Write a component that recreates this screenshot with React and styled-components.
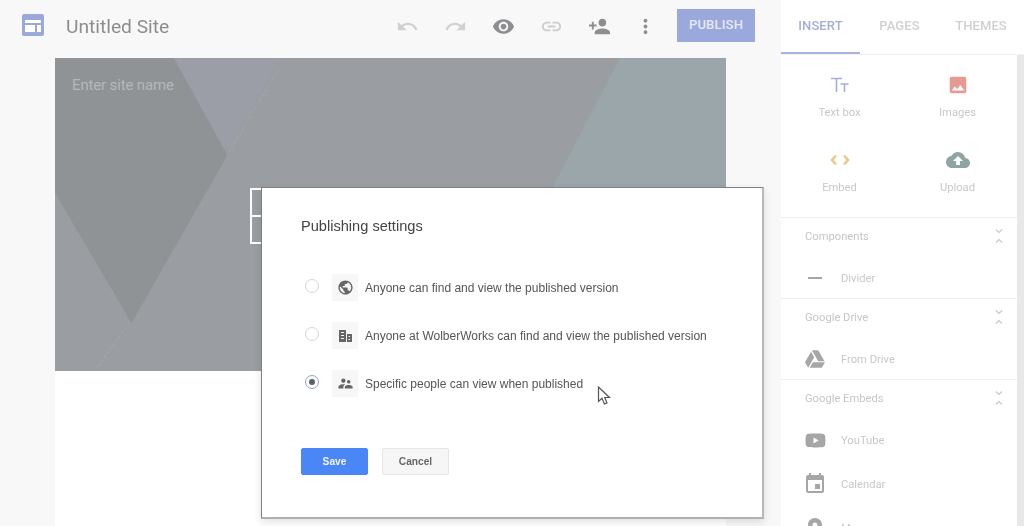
import React from "react";
import styled, { createGlobalStyle } from "styled-components";
import {
  MdUndo, MdRedo, MdVisibility, MdLink, MdPersonAdd, MdMoreVert, MdPublic, MdSupervisorAccount,
  MdImage, MdCloudUpload, MdRemove, MdEvent, MdPlace,
} from "react-icons/md";
import { FaGoogleDrive, FaYoutube } from "react-icons/fa";

const GlobalStyle = createGlobalStyle`
  html, body { margin: 0; padding: 0; height: 100%; overflow: hidden; background: #f8f8f9; }
  body { font-family: Roboto, "Liberation Sans", sans-serif; }
`;

const Page = styled.div`
  position: relative;
  display: grid;
  grid-template-columns: 781px 243px;
  width: 1024px;
  height: 526px;
  overflow: hidden;
  filter: blur(0.4px);
`;

// Left side: toolbar and site canvas
const Main = styled.div`
  display: flex;
  flex-direction: column;
  min-width: 0;
`;
const TopBar = styled.header`
  display: flex;
  align-items: center;
  height: 58px;
  padding: 0 26px 0 22px;
  box-sizing: border-box;
`;
const Logo = styled.svg`
  width: 22px;
  height: 22px;
  margin-top: -8px;
`;
const SiteTitle = styled.div`
  margin: -6px 0 0 22px;
  font-size: 19.2px;
  color: #8d8d8f;
`;
const Tools = styled.div`
  display: flex;
  margin: -6px 10px 0 auto;
`;
const ToolButton = styled.div`
  display: flex;
  align-items: center;
  justify-content: center;
  width: ${(p) => (p.$narrow ? "44px" : "48px")};
  font-size: 23px;
  color: ${(p) => p.$color || "#d0d0d2"};
`;
const PublishButton = styled.div`
  display: flex;
  align-items: center;
  justify-content: center;
  width: 78px;
  height: 33px;
  margin-top: -8px;
  padding-bottom: 2px;
  box-sizing: border-box;
  background: #9aa8dc;
  color: #e6e9f6;
  font-size: 13px;
  font-weight: 500;
  letter-spacing: 0.2px;
`;
const Canvas = styled.div`
  flex: 1;
  width: 671px;
  margin-left: 55px;
  background: #fff;
`;
const Hero = styled.div`
  position: relative;
  height: 313px;
  background: #9a9ea3;
`;
const HeroArt = styled.svg`
  display: block;
  width: 671px;
  height: 313px;
`;
const SiteName = styled.div`
  position: absolute;
  left: 17px;
  top: 18px;
  font-size: 15px;
  letter-spacing: -0.15px;
  color: #b5b7ba;
`;
const TitleStub = styled.div`
  position: absolute;
  left: 195px;
  top: 130px;
  width: 30px;
  height: 56px;
  box-sizing: border-box;
  border: 2px solid #fff;
  &::after {
    content: "";
    display: block;
    height: 2px;
    margin-top: 25px;
    background: #fff;
  }
`;

// Right side: insert panel
const Side = styled.aside`
  display: flex;
  flex-direction: column;
  background: #fff;
  overflow: hidden;
`;
const Tabs = styled.nav`
  display: grid;
  grid-template-columns: 79px 79px 84px;
  height: 55px;
  box-sizing: border-box;
  border-bottom: 1px solid #f2f2f2;
`;
const Tab = styled.div`
  display: flex;
  align-items: center;
  justify-content: center;
  height: 54px;
  box-sizing: border-box;
  padding-bottom: 2px;
  font-size: 13px;
  font-weight: 500;
  letter-spacing: 0.1px;
  color: ${(p) => (p.$active ? "#a3aed9" : "#cfd0d2")};
  border-bottom: 2px solid ${(p) => (p.$active ? "#a9b4de" : "transparent")};
`;
const SideBody = styled.div`
  display: flex;
  flex-direction: column;
  width: 236px;
  border-right: 7px solid #e8e8e8;
`;
const ToolGrid = styled.div`
  display: grid;
  grid-template-columns: 117px 119px;
  padding-bottom: 12px;
  border-bottom: 1px solid #efefef;
`;
const ToolCell = styled.div`
  display: flex;
  flex-direction: column;
  align-items: center;
  height: 75px;
  padding-top: 19px;
  box-sizing: border-box;
`;
const ToolIcon = styled.div`
  display: flex;
  align-items: center;
  justify-content: center;
  height: 22px;
  font-size: ${(p) => p.$size || 24}px;
  color: ${(p) => p.$color};
`;
const ToolLabel = styled.div`
  margin-top: 10px;
  font-size: 11.2px;
  line-height: 14px;
  color: #c8c8c8;
`;
const Section = styled.section`
  border-bottom: ${(p) => (p.$last ? "none" : "1px solid #efefef")};
`;
const SectionHeader = styled.div`
  display: flex;
  align-items: center;
  justify-content: space-between;
  height: 36px;
  padding: 0 13px 0 24px;
  font-size: 11.2px;
  color: #c6c6c6;
`;
const Chevrons = styled.svg`
  width: 10px;
  height: 18px;
`;
const ItemList = styled.div`
  display: flex;
  flex-direction: column;
  gap: 4px;
  padding-top: 4px;
`;
const Item = styled.div`
  display: flex;
  align-items: center;
  height: 40px;
  padding-left: 22px;
  font-size: 11.2px;
  color: #c8c8c8;
`;
const ItemIcon = styled.div`
  display: flex;
  align-items: center;
  justify-content: center;
  width: 24px;
  margin-right: 14px;
  font-size: ${(p) => p.$size || 24}px;
  color: #a6a6a6;
`;

// Publishing dialog
const Dialog = styled.div`
  position: absolute;
  left: 261px;
  top: 187px;
  width: 503px;
  height: 332px;
  box-sizing: border-box;
  padding: 29px 39px 0;
  background: #fff;
  border: 1px solid #7f8084;
  border-right: 2px solid #b8b8b8;
  border-bottom: 2px solid #b0b0b0;
  box-shadow: 0 3px 8px rgba(0, 0, 0, 0.12);
`;
const DialogTitle = styled.h2`
  margin: 0 0 39px;
  font: 400 14.6px/18px "Liberation Sans", Arial, sans-serif;
  color: #444;
`;
const Options = styled.div`
  display: flex;
  flex-direction: column;
  gap: 21px;
`;
const Option = styled.div`
  display: flex;
  align-items: center;
  height: 27px;
`;
const Radio = styled.span`
  display: flex;
  align-items: center;
  justify-content: center;
  width: 14px;
  height: 14px;
  margin: -3px 13px 0 4px;
  box-sizing: border-box;
  border-radius: 50%;
  border: 1px solid ${(p) => (p.$checked ? "#8e9fd4" : "#d6d6d6")};
  &::after {
    content: "";
    display: ${(p) => (p.$checked ? "block" : "none")};
    width: 6px;
    height: 6px;
    border-radius: 50%;
    background: #5a5f68;
  }
`;
const OptionIcon = styled.span`
  display: flex;
  align-items: center;
  justify-content: center;
  width: 26px;
  height: 27px;
  margin-right: 7px;
  background: #f7f7f7;
  font-size: 17px;
  color: #666;
`;
const OptionText = styled.span`
  font: 400 12px/16px "Liberation Sans", Arial, sans-serif;
  color: #555;
`;
const Actions = styled.div`
  display: flex;
  gap: 14px;
  margin-top: 51px;
`;
const Button = styled.div`
  display: flex;
  align-items: center;
  justify-content: center;
  width: 67px;
  height: 27px;
  box-sizing: border-box;
  border-radius: 2px;
  font: 700 10.2px "Liberation Sans", Arial, sans-serif;
  color: ${(p) => (p.$primary ? "#f2f6ff" : "#666")};
  background: ${(p) => (p.$primary ? "#4a86f5" : "#f6f6f6")};
  border: 1px solid ${(p) => (p.$primary ? "#4a86f5" : "#e6e6e6")};
`;
const Pointer = styled.svg`
  position: absolute;
  left: 597px;
  top: 386px;
  width: 15px;
  height: 20px;
`;

function Chevs() {
  return (
    <Chevrons viewBox="0 0 10 18" fill="none" stroke="#c9c9c9" strokeWidth="1.2">
      <path d="M2 2.500l3 3 3-3" />
      <path d="M2 15.500l3-3 3 3" />
    </Chevrons>
  );
}

function OfficeIcon() {
  return (
    <svg width="13" height="13" viewBox="0 0 13 13" fill="#666">
      <path d="M0 1h7v12H0z" />
      <path d="M8 5h5v8H8z" />
      <path fill="#f7f7f7" d="M2 3h3v1H2zM2 6h3v1H2zM2 9h3v1H2zM9.500 7H11v1H9.500zM9.500 10H11v1H9.500z" />
    </svg>
  );
}

function TextBoxIcon() {
  return (
    <svg width="18" height="16" viewBox="0 0 18 16" fill="none" stroke="#a3aedf" strokeWidth="1.6">
      <path d="M0 1.500h11M5.500 1.500V15M9.500 7h8M13.500 7v8" />
    </svg>
  );
}

function EmbedIcon() {
  return (
    <svg width="20" height="12" viewBox="0 0 20 12" fill="none" stroke="#ecc98a" strokeWidth="2.6">
      <path d="M6 1.500L2 6l4 4.500M14 1.500L18 6l-4 4.500" />
    </svg>
  );
}

export default function App() {
  return (
    <Page>
      <GlobalStyle />
      <Main>
        <TopBar>
          <Logo viewBox="0 0 22 22">
            <rect width="22" height="22" rx="2" fill="#9aa8dc" />
            <path fill="#fff" d="M3 6h16v3H3zM3 11h10v7H3zM15 11h4v7h-4z" />
          </Logo>
          <SiteTitle>Untitled Site</SiteTitle>
          <Tools>
            <ToolButton><MdUndo /></ToolButton>
            <ToolButton><MdRedo /></ToolButton>
            <ToolButton $color="#8e8e90"><MdVisibility /></ToolButton>
            <ToolButton $color="#cdcdcf"><MdLink /></ToolButton>
            <ToolButton $color="#8e8e90"><MdPersonAdd /></ToolButton>
            <ToolButton $narrow $color="#8e8e90"><MdMoreVert /></ToolButton>
          </Tools>
          <PublishButton>PUBLISH</PublishButton>
        </TopBar>
        <Canvas>
          <Hero>
            <HeroArt viewBox="0 0 671 313">
              <path fill="#909395" d="M0 0H119L172.500 97L76.500 265L0 135Z" />
              <path fill="#9b9ea6" d="M119 0H224L172.500 97Z" />
              <path fill="#9aa6aa" d="M565 0H671V313H402Z" />
              <path stroke="#a4a69e" strokeWidth="2" strokeDasharray="3 2" opacity="0.7" d="M224 10L172.500 97M74 265L43 309" />
            </HeroArt>
            <SiteName>Enter site name</SiteName>
            <TitleStub />
          </Hero>
        </Canvas>
      </Main>
      <Side>
        <Tabs>
          <Tab $active>INSERT</Tab>
          <Tab>PAGES</Tab>
          <Tab>THEMES</Tab>
        </Tabs>
        <SideBody>
          <ToolGrid>
            <ToolCell>
              <ToolIcon><TextBoxIcon /></ToolIcon>
              <ToolLabel>Text box</ToolLabel>
            </ToolCell>
            <ToolCell>
              <ToolIcon $color="#e69a92" $size={22}><MdImage /></ToolIcon>
              <ToolLabel>Images</ToolLabel>
            </ToolCell>
            <ToolCell>
              <ToolIcon><EmbedIcon /></ToolIcon>
              <ToolLabel>Embed</ToolLabel>
            </ToolCell>
            <ToolCell>
              <ToolIcon $color="#8fa5a3" $size={24}><MdCloudUpload /></ToolIcon>
              <ToolLabel>Upload</ToolLabel>
            </ToolCell>
          </ToolGrid>
          <Section>
            <SectionHeader>Components<Chevs /></SectionHeader>
            <ItemList>
              <Item><ItemIcon><MdRemove /></ItemIcon>Divider</Item>
            </ItemList>
          </Section>
          <Section>
            <SectionHeader>Google Drive<Chevs /></SectionHeader>
            <ItemList>
              <Item><ItemIcon $size={20}><FaGoogleDrive /></ItemIcon>From Drive</Item>
            </ItemList>
          </Section>
          <Section $last>
            <SectionHeader>Google Embeds<Chevs /></SectionHeader>
            <ItemList>
              <Item><ItemIcon $size={21}><FaYoutube /></ItemIcon>YouTube</Item>
              <Item><ItemIcon><MdEvent /></ItemIcon>Calendar</Item>
              <Item><ItemIcon><MdPlace /></ItemIcon>Map</Item>
            </ItemList>
          </Section>
        </SideBody>
      </Side>
      <Dialog>
        <DialogTitle>Publishing settings</DialogTitle>
        <Options>
          <Option>
            <Radio />
            <OptionIcon><MdPublic /></OptionIcon>
            <OptionText>Anyone can find and view the published version</OptionText>
          </Option>
          <Option>
            <Radio />
            <OptionIcon><OfficeIcon /></OptionIcon>
            <OptionText>Anyone at WolberWorks can find and view the published version</OptionText>
          </Option>
          <Option>
            <Radio $checked />
            <OptionIcon><MdSupervisorAccount /></OptionIcon>
            <OptionText>Specific people can view when published</OptionText>
          </Option>
        </Options>
        <Actions>
          <Button $primary>Save</Button>
          <Button>Cancel</Button>
        </Actions>
      </Dialog>
      <Pointer viewBox="0 0 15 20" fill="#fff" stroke="#555" strokeWidth="1.2">
        <path d="M1.500 1V15.500L5 12.300L7.400 18L10 16.900L7.700 11.500H12.500Z" />
      </Pointer>
    </Page>
  );
}
